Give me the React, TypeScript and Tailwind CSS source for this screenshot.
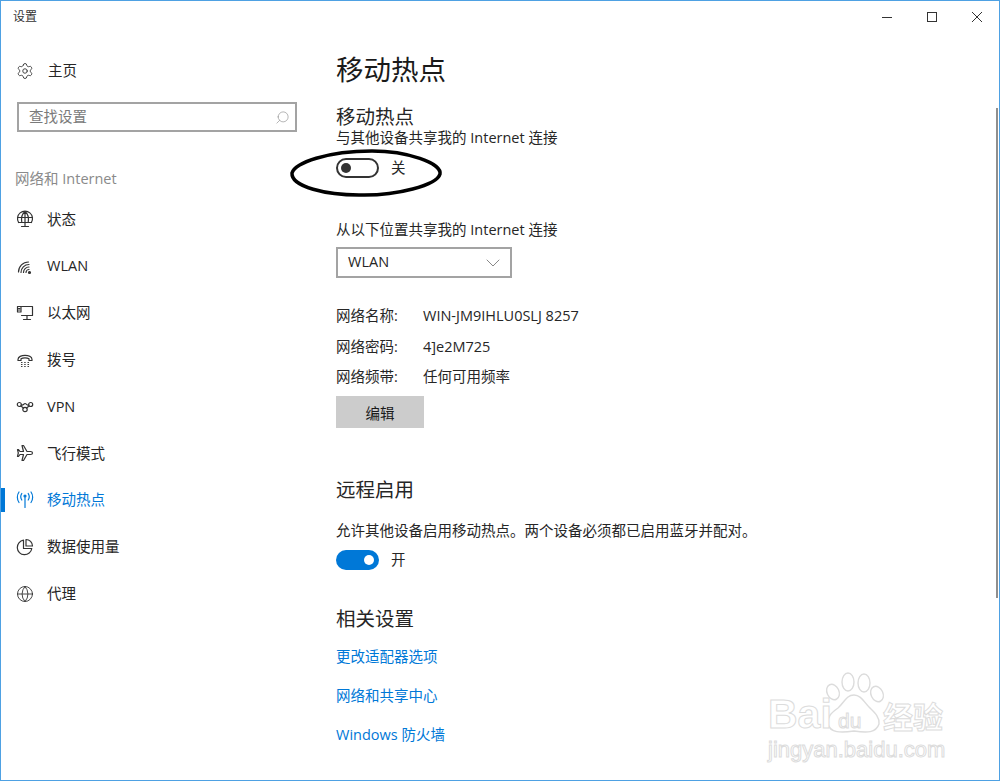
import { Search, ChevronDown, Settings, Globe } from 'lucide-react';
import type { ReactNode } from 'react';

const FONT = "font-['Open_Sans','Noto_Sans_CJK_SC',sans-serif]";

function Icon({ children, color = '#333' }: { children: ReactNode; color?: string }) {
  return (
    <svg width="18" height="18" viewBox="0 0 18 18" fill="none" stroke={color} strokeWidth="1.2" strokeLinecap="round" strokeLinejoin="round">
      {children}
    </svg>
  );
}

const StatusIcon = () => (
  <Icon>
    <path d="M2.600 12.500A7.500 7.500 0 1 1 15.400 12.500" />
    <path d="M1.500 7.500h15M2.500 12.500h13M9 1.500v11M5.800 12.500C5 8 5.800 4 9 1.500c3.200 2.500 4 6.500 3.200 11" />
    <path d="M9 12.500v3.500M5.500 16.500h7" />
  </Icon>
);

const WlanIcon = () => (
  <Icon>
    <path d="M2.500 15C2.500 9.500 7 5 12.500 5" />
    <path d="M5 15.500C5 11 8.500 7.500 13 7.500" />
    <path d="M7.500 15.500C7.500 12.500 10 10 13 10" />
    <path d="M10 15.500C10 14 11.500 12.500 13 12.500" />
    <circle cx="13.500" cy="15.500" r="1" fill="#333" />
  </Icon>
);

const EthernetIcon = () => (
  <Icon>
    <path d="M5.500 2.500h11v9H5.500" />
    <path d="M1.500 2.500h3.500v5.500h-3.500z" />
    <path d="M2.500 4.500h1.500M2.500 6h1.500M11 11.500v3.500M7.500 15.500h7" />
  </Icon>
);

const DialIcon = () => (
  <Icon>
    <path d="M2 8.500C2 3 16 3 16 8.500V9.500H13V7.800C11 6.500 7 6.500 5 7.800V9.500H2z" />
    <path d="M5.500 11.500h.5M8.700 11.500h.5M12 11.500h.5M5.500 13.500h.5M8.700 13.500h.5M12 13.500h.5M5.500 15.500h.5M8.700 15.500h.5M12 15.500h.5" />
  </Icon>
);

const VpnIcon = () => (
  <Icon>
    <circle cx="3.300" cy="6.500" r="2" />
    <circle cx="14.700" cy="6.500" r="2" />
    <circle cx="9" cy="11.500" r="2.200" />
    <path d="M5.300 7C7 8 8 5.500 9 5.500c1.500 0 2 2.500 3.700 1.500M5.500 8.500l2 1.500M12.500 8.500l-2 1.500" />
  </Icon>
);

const PlaneIcon = () => (
  <Icon>
    <path d="M16.500 9c0-1-1-1.500-2-1.500H11L7.500 1.500H6L7.500 7.500H4L2.500 5.500H1.500L2.300 9L1.500 12.500H2.500L4 10.500H7.500L6 16.500H7.500L11 10.500H14.500C15.500 10.500 16.500 10 16.500 9Z" />
  </Icon>
);

const HotspotIcon = () => (
  <Icon color="#0078d7">
    <path d="M9 6.500V16.500" />
    <circle cx="9" cy="5" r="1" fill="#0078d7" />
    <path d="M5.800 2.500C4.500 4.500 4.500 7 5.800 9M12.200 2.500C13.500 4.500 13.500 7 12.200 9" />
    <path d="M3 1C.8 4 .8 8.500 3 11.500M15 1C17.200 4 17.200 8.500 15 11.500" />
  </Icon>
);

const DataIcon = () => (
  <Icon>
    <path d="M7.500 2.200A7.300 7.300 0 1 0 15.800 10.500H7.500z" />
    <path d="M10 1.500A6.500 6.500 0 0 1 16.500 8H10z" />
  </Icon>
);

const navItems = [
  { label: '状态', icon: <StatusIcon /> },
  { label: 'WLAN', icon: <WlanIcon /> },
  { label: '以太网', icon: <EthernetIcon /> },
  { label: '拨号', icon: <DialIcon /> },
  { label: 'VPN', icon: <VpnIcon /> },
  { label: '飞行模式', icon: <PlaneIcon /> },
  { label: '移动热点', icon: <HotspotIcon />, active: true },
  { label: '数据使用量', icon: <DataIcon /> },
  { label: '代理', icon: <Globe size={18} strokeWidth={1.2} color="#333" /> },
];

const infoRows = [
  ['网络名称:', 'WIN-JM9IHLU0SLJ 8257'],
  ['网络密码:', '4]e2M725'],
  ['网络频带:', '任何可用频率'],
];

const links = ['更改适配器选项', '网络和共享中心', 'Windows 防火墙'];

function Sidebar() {
  return (
    <aside className="w-[335px] shrink-0 flex flex-col">
      <div className="mt-[26px] h-[26px] flex items-center pl-[15px] gap-[14px]">
        <Settings size={18} strokeWidth={1.2} color="#333" />
        <span>主页</span>
      </div>
      <div className="mt-[18px] ml-[16px] w-[280px] h-[30px] border-2 border-[#a3a3a3] flex items-center justify-between pl-[10px] pr-[5px] text-[#7a7a7a]">
        <span>查找设置</span>
        <Search size={15} strokeWidth={1} color="#8a8a8a" className="-scale-x-100" />
      </div>
      <div className="mt-[36px] h-[22px] leading-[22px] pl-[14px] text-[#8a8a8a]">网络和 Internet</div>
      <nav className="mt-[6px] flex flex-col">
        {navItems.map((item) => (
          <div key={item.label} className={`relative h-[46.800px] flex items-center pl-[15px] ${item.active ? 'text-[#0078d7]' : ''}`}>
            {item.active && <div className="absolute left-0 top-[11px] w-[4px] h-[24px] bg-[#0078d7]" />}
            <span className="w-[32px] flex items-center">{item.icon}</span>
            <span className="-ml-px">{item.label}</span>
          </div>
        ))}
      </nav>
    </aside>
  );
}

function Toggle({ on }: { on: boolean }) {
  return (
    <div className="flex items-center h-[20px] gap-[12px]">
      {on ? (
        <div className="w-[43px] h-[20px] rounded-full bg-[#0078d7] flex items-center justify-end pr-[5px]">
          <div className="w-[10px] h-[10px] rounded-full bg-white" />
        </div>
      ) : (
        <div className="w-[43px] h-[20px] rounded-full border-2 border-[#333] flex items-center pl-[3px]">
          <div className="w-[10px] h-[10px] rounded-full bg-[#333]" />
        </div>
      )}
      <span>{on ? '开' : '关'}</span>
    </div>
  );
}

function Content() {
  return (
    <main className="flex-1 flex flex-col items-start">
      <h1 className="mt-[18px] h-[40px] leading-[40px] text-[27.500px] font-normal text-[#1a1a1a]">移动热点</h1>
      <h2 className="mt-[14px] h-[26px] leading-[26px] text-[19.500px] font-normal">移动热点</h2>
      <p className="-mt-[2px] mb-[10px] h-[20px] leading-[20px]">与其他设备共享我的 Internet 连接</p>
      <Toggle on={false} />
      <p className="mt-[42px] h-[20px] leading-[20px]">从以下位置共享我的 Internet 连接</p>
      <div className="mt-[7px] w-[176px] h-[31px] border-2 border-[#a3a3a3] flex items-center justify-between pl-[10px] pr-[5px] pb-[2px]">
        <span>WLAN</span>
        <ChevronDown size={24} strokeWidth={0.700} color="#555" className="mt-[2px]" />
      </div>
      <div className="mt-[23px] flex flex-col">
        {infoRows.map(([label, value]) => (
          <div key={label} className="h-[30.500px] flex items-center">
            <span className="w-[87px]">{label}</span>
            <span>{value}</span>
          </div>
        ))}
      </div>
      <button className="mt-[3.500px] w-[88px] h-[32px] pt-[3px] bg-[#cccccc] text-[#1a1a1a]">编辑</button>
      <h2 className="mt-[49px] h-[26px] leading-[26px] text-[19.500px] font-normal">远程启用</h2>
      <p className="mt-[18px] mb-[9px] h-[20px] leading-[20px]">允许其他设备启用移动热点。两个设备必须都已启用蓝牙并配对。</p>
      <Toggle on />
      <h2 className="mt-[36px] h-[26px] leading-[26px] text-[19.500px] font-normal">相关设置</h2>
      <div className="mt-[15px] flex flex-col gap-[19px] text-[#0078d7]">
        {links.map((link) => (
          <a key={link} className="h-[20px] leading-[20px]">{link}</a>
        ))}
      </div>
    </main>
  );
}

function Watermark() {
  return (
    <div className="absolute left-[765px] top-[670px] w-[185px] h-[92px] text-white font-bold pointer-events-none font-['Liberation_Sans',sans-serif] [-webkit-text-stroke:1px_#dcdcdc]">
      <svg className="absolute left-[58px] top-0" width="62" height="66" viewBox="0 0 62 66" fill="none" stroke="#dcdcdc" strokeWidth="1.400">
        <ellipse cx="9" cy="21" rx="6" ry="8" transform="rotate(-25 9 21)" />
        <ellipse cx="24" cy="11" rx="6" ry="9" />
        <ellipse cx="40" cy="12" rx="6" ry="9" />
        <ellipse cx="53" cy="23" rx="6" ry="8" transform="rotate(-25 53 23)" />
        <path d="M30 24C22 24 20 32 14 37C7 42 3 46 4 53C6 62 17 62 30 60C43 62 52 62 55 53C56 46 50 41 45 36C40 31 37 24 30 24Z" />
      </svg>
      <span className="absolute left-[2px] top-[20px] text-[41px] leading-[46px]">Bai</span>
      <span className="absolute left-[72px] top-[38px] text-[21px] leading-[24px] font-normal">du</span>
      <span className="absolute left-[117px] top-[26px] text-[30px] leading-[36px] font-['Noto_Sans_CJK_SC',sans-serif]">经验</span>
      <span className="absolute left-[2px] top-[66px] text-[22px] leading-[26px] font-normal whitespace-nowrap">jingyan.baidu.com</span>
    </div>
  );
}

function WindowButton({ children }: { children: ReactNode }) {
  return (
    <div className="w-[45px] flex justify-center">
      <svg width="12" height="12" viewBox="0 0 12 12" fill="none" stroke="#333" strokeWidth="1">
        {children}
      </svg>
    </div>
  );
}

export default function App() {
  return (
    <div className={`relative w-[1000px] h-[781px] bg-white border border-[#4ea1e3] flex flex-col overflow-hidden text-[14.500px] text-[#262626] ${FONT}`}>
      <header className="h-[31px] shrink-0 flex items-center justify-between">
        <span className="pl-[12px] text-[12px] text-[#333]">设置</span>
        <div className="flex">
          <WindowButton><path d="M1 6.500h10" /></WindowButton>
          <WindowButton><rect x="1.500" y="1.500" width="9" height="9" /></WindowButton>
          <WindowButton><path d="M1 1l10 10M11 1L1 11" /></WindowButton>
        </div>
      </header>
      <div className="flex flex-1">
        <Sidebar />
        <Content />
      </div>
      {/* Scrollbar */}
      <div className="absolute right-[1px] top-[107px] w-[2px] h-[490px] bg-[#8f8f8f]" />
      {/* Hand-drawn ellipse annotation */}
      <svg className="absolute left-[286px] top-[146px]" width="158" height="52" viewBox="0 0 158 52" fill="none" stroke="#000" strokeWidth="3.500" strokeLinecap="round">
        <path d="M5 26C8 16 40 4 85 4C120 4 155 16 153 27C150 38 110 49 72 48C40 48 4 40 5 26Z" />
      </svg>
      <Watermark />
    </div>
  );
}
